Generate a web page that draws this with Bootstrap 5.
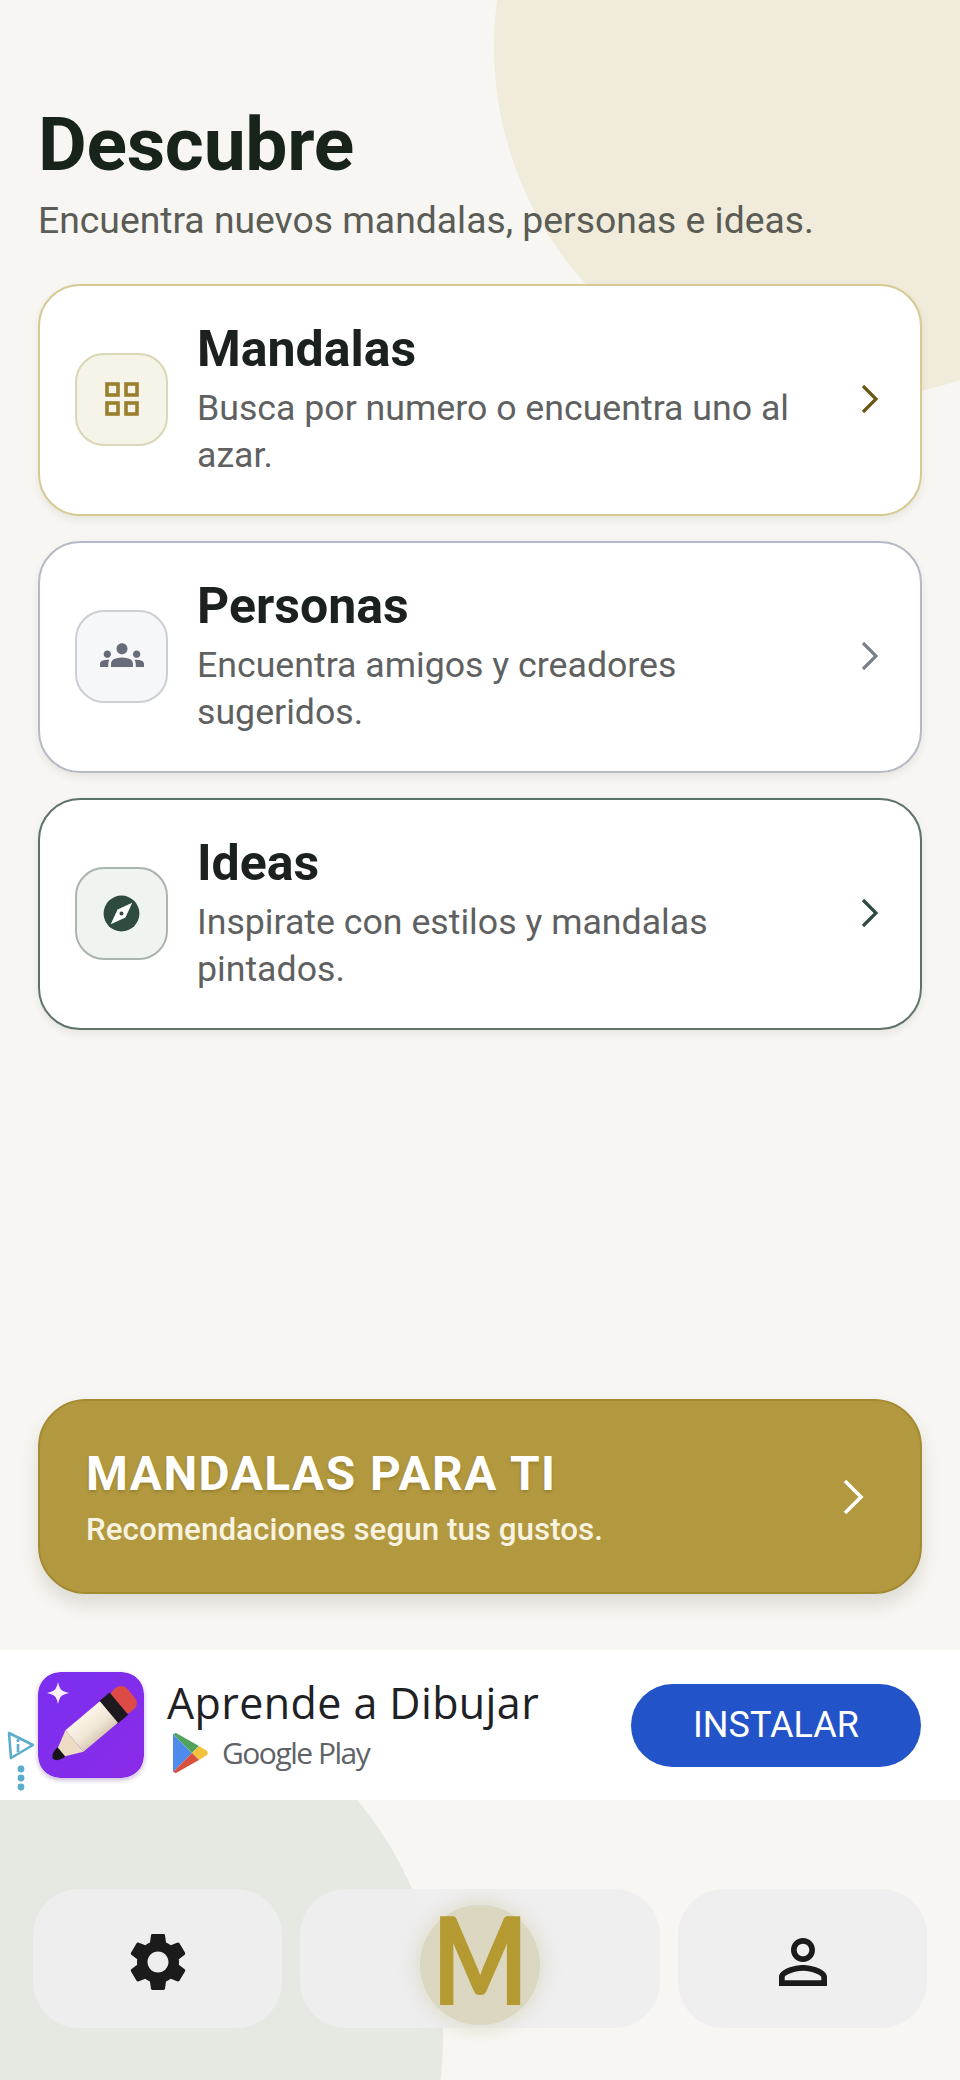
<!DOCTYPE html>
<html lang="es">
<head>
<meta charset="utf-8">
<title>Descubre</title>
<link href="https://cdn.jsdelivr.net/npm/bootstrap@5.3.0/dist/css/bootstrap.min.css" rel="stylesheet">
<style>
html,body{margin:0;background:#f7f6f2;}
body{font-family:Roboto,"Liberation Sans",sans-serif;}
.screen{width:960px;height:2080px;position:relative;overflow:hidden;background:#f7f6f2;}
.blob-gold{position:absolute;left:494px;top:-305px;width:704px;height:704px;border-radius:50%;background:#f0ebda;}
.blob-green{position:absolute;left:-297px;top:1667px;width:740px;height:740px;border-radius:50%;background:#e5e9e2;}
.stack{position:relative;height:2080px;}
.head{padding:100px 38px 0;}
.page-title{font-size:75px;font-weight:700;line-height:88px;color:#182319;margin:0;letter-spacing:-.3px;}
.page-sub{font-size:37.3px;line-height:46px;color:#5a5c55;margin:9px 0 0;}
.cards{padding:41px 38px 0;gap:25px;}
.dcard{height:232px;border:2px solid #ccc;border-radius:42px;background:#fff;padding:0 41px 0 35px;gap:29px;box-shadow:0 4px 8px rgba(40,40,30,.08);}
.dcard.gold{border-color:#d6ca92;}
.dcard.gray{border-color:#b6b9c5;}
.dcard.green{border-color:#5f7268;}
.ibox{width:93px;height:93px;border-radius:29px;border:2px solid #ddd;flex:none;margin-top:-2px;}
.gold .ibox{background:#f6f3e8;border-color:#dcd6b8;}
.gray .ibox{background:#f6f7f9;border-color:#cccfd4;}
.green .ibox{background:#f0f4f1;border-color:#aab5ae;}
.dtitle{font-size:50px;font-weight:700;line-height:56px;color:#1b211e;margin:0 0 8px;}
.ddesc{font-size:35.7px;line-height:47px;color:#5f6161;margin:0;}
.dtext{flex:1;min-width:0;}
.chev{flex:none;width:18px;height:30px;fill:none;stroke-width:3.2;margin-top:-2px;}
.banner{margin:0 38px;height:195px;border-radius:48px;background:#b2983e;border:2px solid #a48a33;padding:0 56px 0 46px;box-shadow:0 10px 18px rgba(60,50,20,.14);color:#fff;}
.btitle{font-size:47.8px;font-weight:700;line-height:54px;letter-spacing:1.5px;margin:2px 0 11px;text-shadow:0 2px 3px rgba(80,60,10,.25);}
.bsub{font-size:31.4px;font-weight:500;line-height:36px;margin:0;color:#f8f3e0;}
.adbar{margin-top:56px;height:150px;background:#fff;padding:0 39px 0 38px;position:relative;}
.adicon{width:106px;height:106px;flex:none;border-radius:22px;box-shadow:0 2px 5px rgba(60,20,120,.3);display:block;}
.adname{font-size:43px;line-height:50px;color:#202124;font-family:"Open Sans","Liberation Sans",sans-serif;letter-spacing:.4px;margin:0;}
.adstore{font-size:30px;line-height:40px;color:#5f6368;font-family:"Open Sans","Liberation Sans",sans-serif;letter-spacing:-1.5px;gap:14px;margin:5px 0 0 5px;}
.adtext{margin-left:23px;flex:1;margin-top:0;}
.adbtn{width:290px;height:83px;border-radius:42px;background:#2353c8;color:#fff;font-size:36px;border:0;padding:0;font-family:Roboto,sans-serif;}
.adchoice{position:absolute;left:7px;top:81px;width:28px;height:61px;}
.navrow{padding:89px 33px 0;gap:18px;height:280px;}
.npill{height:139px;border-radius:46px;background:rgba(238,238,239,.95);}
.npw{width:249px;}
.npw svg{margin-top:6px;}
.npm{width:360px;flex:none;position:relative;}
.mglow{width:120px;height:120px;border-radius:50%;background:#dbd7c0;box-shadow:0 0 14px 7px rgba(219,215,192,.55);margin-top:16px;}
.mletter{font-family:Lato,sans-serif;font-weight:900;font-size:122px;line-height:120px;color:#b59a32;display:block;transform:translateY(-7px) scaleX(.82);}
</style>
</head>
<body>
<div class="screen">
  <div class="blob-gold"></div>
  <div class="blob-green"></div>
  <div class="stack d-flex flex-column">
    <header class="head">
      <h1 class="page-title">Descubre</h1>
      <p class="page-sub">Encuentra nuevos mandalas, personas e ideas.</p>
    </header>
    <div class="cards d-flex flex-column">
      <div class="dcard gold d-flex align-items-center">
        <div class="ibox d-flex align-items-center justify-content-center">
          <svg width="34" height="34" viewBox="0 0 34 34" fill="none" stroke="#9a7f2e" stroke-width="3.6"><rect x="2" y="2" width="11" height="11"/><rect x="21" y="2" width="11" height="11"/><rect x="2" y="21" width="11" height="11"/><rect x="21" y="21" width="11" height="11"/></svg>
        </div>
        <div class="dtext">
          <h2 class="dtitle">Mandalas</h2>
          <p class="ddesc">Busca por numero o encuentra uno al azar.</p>
        </div>
        <svg class="chev" viewBox="0 0 18 30" stroke="#6a5716"><path d="M2 2l13 13L2 28"/></svg>
      </div>
      <div class="dcard gray d-flex align-items-center">
        <div class="ibox d-flex align-items-center justify-content-center">
          <svg width="44" height="44" viewBox="0 0 24 24" fill="#666d78"><path d="M12 12.75c1.63 0 3.07.39 4.24.9 1.08.48 1.76 1.56 1.76 2.73V18H6v-1.61c0-1.18.68-2.26 1.76-2.73 1.17-.52 2.61-.91 4.24-.91zM4 13c1.1 0 2-.9 2-2s-.9-2-2-2-2 .9-2 2 .9 2 2 2zm1.13 1.1c-.37-.06-.74-.1-1.13-.1-.99 0-1.93.21-2.78.58C.48 14.9 0 15.62 0 16.43V18h4.5v-1.61c0-.83.23-1.61.63-2.29zM20 13c1.1 0 2-.9 2-2s-.9-2-2-2-2 .9-2 2 .9 2 2 2zm4 3.43c0-.81-.48-1.53-1.22-1.85-.85-.37-1.79-.58-2.78-.58-.39 0-.76.04-1.13.1.4.68.63 1.46.63 2.29V18H24v-1.57zM15 8c0 1.66-1.34 3-3 3s-3-1.34-3-3 1.34-3 3-3 3 1.34 3 3z"/></svg>
        </div>
        <div class="dtext">
          <h2 class="dtitle">Personas</h2>
          <p class="ddesc">Encuentra amigos y creadores sugeridos.</p>
        </div>
        <svg class="chev" viewBox="0 0 18 30" stroke="#7b818c"><path d="M2 2l13 13L2 28"/></svg>
      </div>
      <div class="dcard green d-flex align-items-center">
        <div class="ibox d-flex align-items-center justify-content-center">
          <svg width="43" height="43" viewBox="0 0 24 24"><circle cx="12" cy="12" r="10" fill="#2f4a3e"/><path fill="#fff" d="M18 6L9.81 9.81 6 18l8.21-3.81z"/><circle cx="12" cy="12" r="1.1" fill="#2f4a3e"/></svg>
        </div>
        <div class="dtext">
          <h2 class="dtitle">Ideas</h2>
          <p class="ddesc">Inspirate con estilos y mandalas pintados.</p>
        </div>
        <svg class="chev" viewBox="0 0 18 30" stroke="#2f4a3e"><path d="M2 2l13 13L2 28"/></svg>
      </div>
    </div>
    <div class="flex-grow-1"></div>
    <div class="banner d-flex align-items-center justify-content-between">
      <div>
        <p class="btitle">MANDALAS PARA TI</p>
        <p class="bsub">Recomendaciones segun tus gustos.</p>
      </div>
      <svg width="22" height="36" viewBox="0 0 22 36" fill="none" stroke="#fff" stroke-width="3.6"><path d="M3 2l16 16L3 34"/></svg>
    </div>
    <div class="adbar d-flex align-items-center">
      <svg class="adicon" viewBox="0 0 106 106">
        <defs>
          <linearGradient id="pg" x1="0" y1="0" x2="1" y2="1"><stop offset="0" stop-color="#7a2ff0"/><stop offset="1" stop-color="#8a2be8"/></linearGradient>
          <linearGradient id="wood" x1="0" y1="0" x2="0" y2="1"><stop offset="0" stop-color="#fbf4e8"/><stop offset=".6" stop-color="#f0e6d6"/><stop offset="1" stop-color="#d9cbb6"/></linearGradient>
        </defs>
        <rect width="106" height="106" rx="22" fill="url(#pg)"/>
        <path d="M20 10c2 8 3 9 11 11-8 2-9 3-11 11-2-8-3-9-11-11 8-2 9-3 11-11z" fill="#fbeffb"/>
        <g transform="translate(15 87) rotate(-40)">
          <rect x="82" y="-14" width="20" height="28" rx="8" fill="#de4a46"/>
          <rect x="72" y="-14.500" width="14" height="29" fill="#1c1a1e"/>
          <rect x="28" y="-14" width="45" height="28" fill="url(#wood)"/>
          <path d="M10-5L28-14V14L10 5z" fill="#efdcc4"/>
          <path d="M0 0C1-4 6-6 11-6V6C6 6 1 4 0 0z" fill="#161418"/>
        </g>
      </svg>
      <div class="adtext">
        <p class="adname">Aprende a Dibujar</p>
        <div class="adstore d-flex align-items-center">
          <svg width="36" height="40" viewBox="0 0 36 40"><path d="M1 1v38l19-19z" fill="#4f8bea"/><path d="M1 1l19 19 7-7L4 0z" fill="#4fa35d"/><path d="M27 13l8 5c1 1 1 3 0 4l-8 5-7-7z" fill="#f4c13c"/><path d="M1 39l19-19 7 7-23 13z" fill="#d9503f"/></svg>
          <span>Google Play</span>
        </div>
      </div>
      <button class="adbtn" type="button">INSTALAR</button>
      <svg class="adchoice" viewBox="0 0 28 61" fill="none"><path d="M2 2l24 12L4 27z" stroke="#5aaccd" stroke-width="2.6" stroke-linejoin="round"/><path d="M11 13v8" stroke="#5aaccd" stroke-width="2.6"/><circle cx="11" cy="9.500" r="1.500" fill="#5aaccd"/><circle cx="14" cy="38" r="3.400" fill="#5aaccd"/><circle cx="14" cy="47" r="3.400" fill="#5aaccd"/><circle cx="14" cy="56" r="3.400" fill="#5aaccd"/></svg>
    </div>
    <nav class="navrow d-flex">
      <div class="npill npw d-flex align-items-center justify-content-center">
        <svg width="70" height="70" viewBox="0 0 24 24" fill="#1b1b1b"><path d="M19.14 12.94c.04-.3.06-.61.06-.94 0-.32-.02-.64-.07-.94l2.03-1.58c.18-.14.23-.41.12-.61l-1.92-3.32c-.12-.22-.37-.29-.59-.22l-2.39.96c-.5-.38-1.03-.7-1.62-.94l-.36-2.54c-.04-.24-.24-.41-.48-.41h-3.84c-.24 0-.43.17-.47.41l-.36 2.54c-.59.24-1.13.57-1.62.94l-2.39-.96c-.22-.08-.47 0-.59.22L2.74 8.87c-.12.21-.08.47.12.61l2.03 1.58c-.05.3-.09.63-.09.94s.02.64.07.94l-2.03 1.58c-.18.14-.23.41-.12.61l1.92 3.32c.12.22.37.29.59.22l2.39-.96c.5.38 1.03.7 1.62.94l.36 2.54c.05.24.24.41.48.41h3.84c.24 0 .44-.17.47-.41l.36-2.54c.59-.24 1.13-.56 1.62-.94l2.39.96c.22.08.47 0 .59-.22l1.92-3.32c.12-.22.07-.47-.12-.61l-2.01-1.58zM12 15.6c-1.98 0-3.6-1.62-3.6-3.6s1.62-3.6 3.6-3.6 3.6 1.62 3.6 3.6-1.62 3.6-3.6 3.6z"/></svg>
      </div>
      <div class="npill npm d-flex justify-content-center">
        <div class="mglow d-flex align-items-center justify-content-center"><span class="mletter">M</span></div>
      </div>
      <div class="npill npw d-flex align-items-center justify-content-center">
        <svg width="72" height="72" viewBox="0 0 24 24" fill="#1b1b1b"><path d="M12 5.9c1.16 0 2.1.94 2.1 2.1s-.94 2.1-2.1 2.1S9.9 9.16 9.9 8s.94-2.1 2.1-2.1m0 9c2.97 0 6.1 1.46 6.1 2.1v1.1H5.9V17c0-.64 3.13-2.1 6.1-2.1M12 4C9.79 4 8 5.79 8 8s1.79 4 4 4 4-1.79 4-4-1.79-4-4-4zm0 9c-2.67 0-8 1.34-8 4v3h16v-3c0-2.66-5.33-4-8-4z"/></svg>
      </div>
    </nav>
  </div>
</div>
<script src="https://cdn.jsdelivr.net/npm/bootstrap@5.3.0/dist/js/bootstrap.bundle.min.js"></script>
</body>
</html>
